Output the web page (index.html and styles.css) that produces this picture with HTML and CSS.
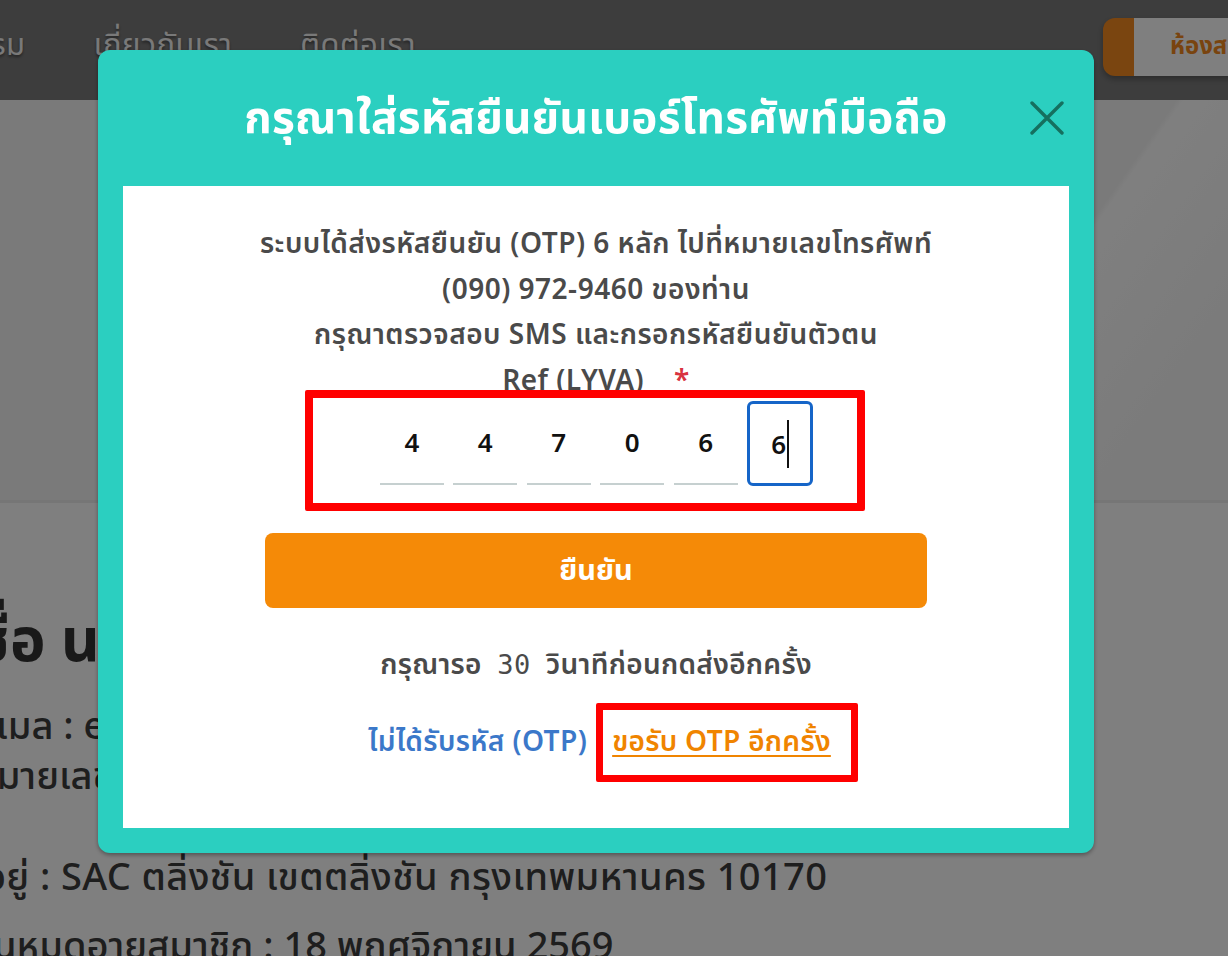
FILE: index.html
```html
<!DOCTYPE html>
<html lang="th">
<head>
<meta charset="utf-8">
<title>OTP</title>
<link rel="stylesheet" href="styles.css">
</head>
<body>
<div class="page">
  <header class="topbar">
    <nav class="nav">
      <a class="nav-item first">กิจกรรม</a>
      <a class="nav-item">เกี่ยวกับเรา</a>
      <a class="nav-item">ติดต่อเรา</a>
    </nav>
    <a class="room-btn">ห้องสมุด</a>
  </header>
  <section class="hero"></section>
  <section class="info">
    <h1 class="info-name">ชื่อ นามสกุล</h1>
    <p class="info-line email">อีเมล : example@mail.com</p>
    <p class="info-line phone">หมายเลขโทรศัพท์ : 090-972-9460</p>
    <p class="info-line addr">ที่อยู่ : SAC ตลิ่งชัน เขตตลิ่งชัน กรุงเทพมหานคร 10170</p>
    <p class="info-line expire">วันหมดอายุสมาชิก : 18 พฤศจิกายน 2569</p>
  </section>
</div>

<div class="overlay"></div>

<div class="modal">
  <div class="modal-head">
    <h2 class="modal-title">กรุณาใส่รหัสยืนยันเบอร์โทรศัพท์มือถือ</h2>
    <button class="close-btn" aria-label="close">
      <svg width="34" height="34" viewBox="0 0 34 34"><path d="M2 2 L32 32 M32 2 L2 32" stroke="#15705f" stroke-width="3.4" stroke-linecap="round" fill="none"/></svg>
    </button>
  </div>
  <div class="modal-body">
    <p class="desc">ระบบได้ส่งรหัสยืนยัน (OTP) 6 หลัก ไปที่หมายเลขโทรศัพท์<br>(090) 972-9460 ของท่าน<br>กรุณาตรวจสอบ SMS และกรอกรหัสยืนยันตัวตน<br>Ref (LYVA) <span class="req">*</span></p>
    <div class="mark otp-mark">
      <div class="otp-row">
        <div class="otp">4</div>
        <div class="otp">4</div>
        <div class="otp">7</div>
        <div class="otp">0</div>
        <div class="otp">6</div>
        <div class="otp focus">6<span class="caret"></span></div>
      </div>
    </div>
    <button class="confirm">ยืนยัน</button>
    <p class="wait">กรุณารอ <span class="mono">30</span> วินาทีก่อนกดส่งอีกครั้ง</p>
    <div class="resend-row">
      <span class="no-otp">ไม่ได้รับรหัส (OTP)</span>
      <span class="mark resend-mark"><a class="resend">ขอรับ OTP อีกครั้ง</a></span>
    </div>
  </div>
</div>
</body>
</html>
```

FILE: styles.css
```css
* { box-sizing: border-box; }
html, body { margin: 0; padding: 0; }
body {
  width: 1228px;
  height: 956px;
  overflow: hidden;
  font-family: "Noto Sans Thai", "Noto Sans Thai UI", "Kanit", "Loma", "Garuda", "Noto Sans", "DejaVu Sans", sans-serif;
  background: #ffffff;
}
.page { width: 1228px; }

.topbar {
  height: 100px;
  background: #7b7b7b;
  display: flex;
  align-items: flex-start;
  overflow: hidden;
}
.nav {
  display: flex;
  gap: 68px;
  padding-top: 24px;
  margin-left: -80px;
}
.nav-item {
  color: #f2f2f2;
  font-size: 31px;
  line-height: 44px;
  letter-spacing: 0.4px;
  text-shadow: 0 2px 3px rgba(0,0,0,0.45);
  white-space: nowrap;
}
.room-btn {
  margin-left: auto;
  margin-top: 18px;
  margin-right: -60px;
  width: 185px;
  height: 58px;
  border-radius: 12px;
  background: #ffffff;
  border-left: 31px solid #f58a20;
  color: #f2891e;
  font-weight: 700;
  font-size: 24px;
  line-height: 58px;
  padding-left: 36px;
  box-shadow: 0 3px 6px rgba(0,0,0,0.3);
  white-space: nowrap;
}

.hero {
  height: 403px;
  background: linear-gradient(125deg, #f4f4f4 0%, #f4f4f4 78%, #ffffff 78.5%, #f6f6f6 92%);
  border-bottom: 3px solid #ededed;
}

.info {
  padding-top: 105px;
  margin-left: -26px;
  color: #3c3c3c;
}
.info-name {
  margin: 0;
  font-size: 60px;
  line-height: 70px;
  font-weight: 700;
  color: #333333;
  white-space: nowrap;
}
.info-line {
  margin: 0;
  font-size: 38px;
  line-height: 50px;
  font-weight: 500;
  white-space: nowrap;
}
.info-line.email { margin-top: 25px; }
.info-line.addr { margin-top: 51px; margin-left: -14px; letter-spacing: 0.4px; }
.info-line.expire { margin-top: 19px; }

.overlay {
  position: fixed;
  inset: 0;
  background: rgba(0,0,0,0.5);
}

.modal {
  position: fixed;
  left: 98px;
  top: 50px;
  width: 996px;
  height: 803px;
  background: #2bcfc0;
  border-radius: 12px;
  box-shadow: 0 2px 4px rgba(0,0,0,0.35);
  padding: 0 25px 25px;
  display: flex;
  flex-direction: column;
}
.modal-head {
  height: 136px;
  display: flex;
  align-items: center;
  justify-content: center;
  position: relative;
}
.modal-title {
  margin: 0 0 -4px;
  color: #ffffff;
  font-size: 44px;
  font-weight: 700;
  line-height: 60px;
  letter-spacing: 0.3px;
}
.close-btn {
  position: absolute;
  right: 5px;
  top: 51px;
  width: 34px;
  height: 34px;
  padding: 0;
  border: 0;
  background: transparent;
}
.close-btn svg { display: block; }

.modal-body {
  flex: 1;
  background: #ffffff;
  display: flex;
  flex-direction: column;
  align-items: center;
  padding-top: 36px;
}
.desc {
  margin: 0;
  text-align: center;
  color: #4a4a4a;
  font-size: 28px;
  font-weight: 600;
  line-height: 45.6px;
  letter-spacing: 0.5px;
  white-space: nowrap;
}
.req { color: #d93340; margin-left: 22px; }

.mark { border: 8px solid #ff0000; border-radius: 2px; }
.otp-mark {
  width: 560px;
  margin: -14px 22px 0 0;
  padding: 3px 44px 17px 67px;
}
.otp-row {
  display: flex;
  gap: 9.8px;
}
.otp {
  width: 64px;
  height: 84px;
  border-bottom: 2px solid #c6d0d0;
  display: flex;
  align-items: center;
  justify-content: center;
  font-size: 26px;
  font-weight: 600;
  color: #111111;
  font-family: "Noto Sans", "DejaVu Sans", sans-serif;
  position: relative;
}
.otp.focus {
  width: 66px;
  height: 85px;
  border: 3px solid #1565c8;
  border-radius: 6px;
}
.caret {
  display: inline-block;
  width: 2px;
  height: 48px;
  background: #111111;
  margin-left: 1px;
}

.confirm {
  margin-top: 22px;
  width: 662px;
  height: 75px;
  border: 0;
  border-radius: 8px;
  background: #f58a07;
  color: #ffffff;
  font-family: inherit;
  font-size: 29px;
  font-weight: 700;
}

.wait {
  margin: 34px 0 0;
  color: #4a4a4a;
  font-size: 28px;
  font-weight: 600;
  line-height: 46px;
  letter-spacing: 0.3px;
  white-space: nowrap;
}
.mono { font-family: "DejaVu Sans Mono", monospace; font-weight: 400; margin: 0 8px; font-size: 27px; }

.resend-row {
  margin: 14px 0 0 34px;
  display: flex;
  align-items: center;
  gap: 9px;
}
.no-otp {
  color: #3b78c9;
  font-size: 28px;
  font-weight: 600;
  letter-spacing: 0.4px;
  white-space: nowrap;
}
.resend-mark {
  border-width: 7px;
  padding: 12px 20px 12px 9px;
  display: block;
}
.resend {
  color: #f08400;
  font-size: 28px;
  font-weight: 600;
  letter-spacing: 0.3px;
  text-decoration: underline;
  text-underline-offset: 4px;
  line-height: 41px;
  display: block;
  white-space: nowrap;
}
```
